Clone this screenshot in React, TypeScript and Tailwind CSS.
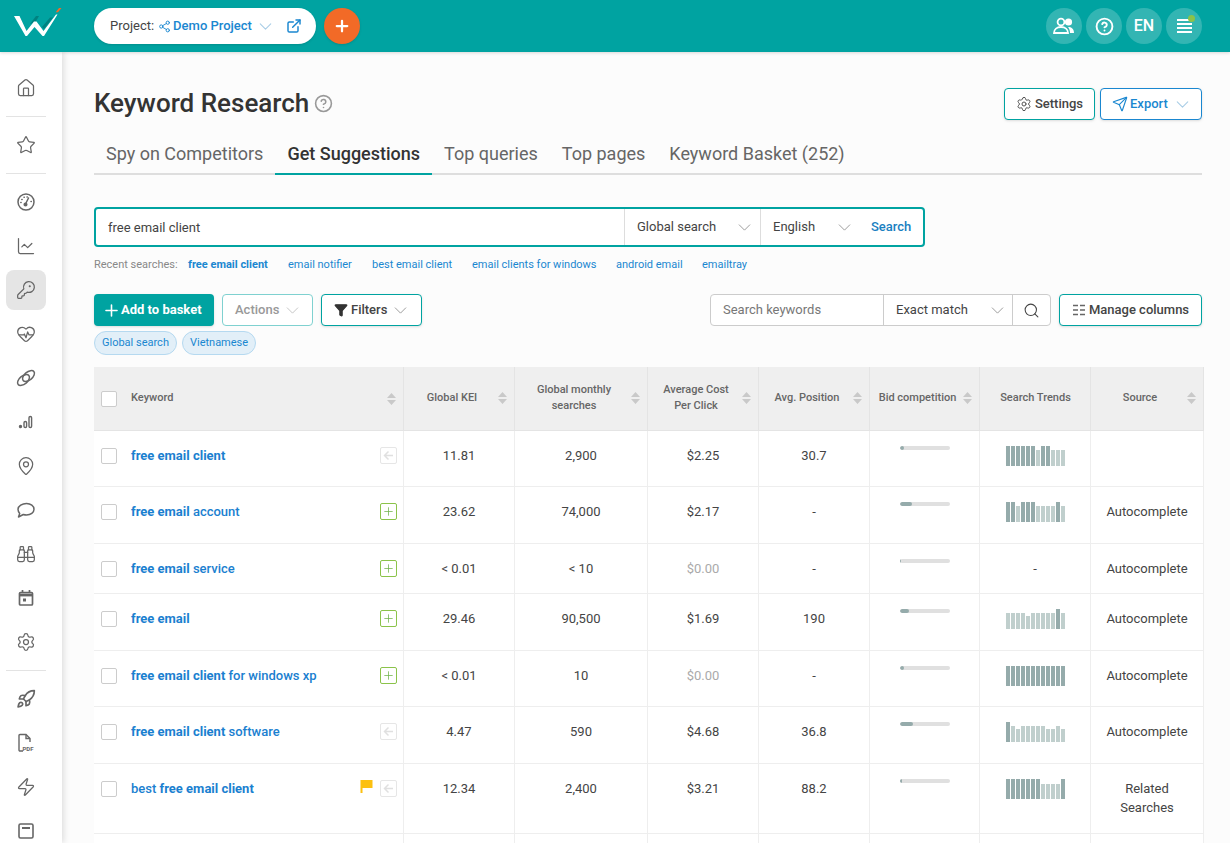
import React from "react";
import {
  Home, Star, ChartLine, KeyRound, HeartPulse, MapPin, Binoculars, Settings, Rocket, Zap,
  Share2, ChevronDown, ExternalLink, Plus, CircleHelp, Send, Search, Filter,
} from "lucide-react";

const COLS = "grid grid-cols-[310px_111px_133px_111px_111px_110px_111px_113px]";

const Gauge = () => (
  <svg width="20" height="20" viewBox="0 0 20 20" fill="none" stroke="#666" strokeWidth="1.5" strokeLinecap="round">
    <circle cx="10" cy="10" r="8" />
    <path d="M9.500 12l3-6" />
    <circle cx="9.500" cy="12.500" r="1.300" fill="#666" />
    <path d="M4.800 10.500h.3M5.800 7.500h.3M8 5.300h.3M11 5h.3M15 9.500h.3" />
  </svg>
);
const LinkIcon = () => (
  <svg width="22" height="22" viewBox="0 0 22 22" fill="none" stroke="#666" strokeWidth="1.5">
    <ellipse cx="8.500" cy="13" rx="7" ry="4" transform="rotate(-40 8.500 13)" />
    <ellipse cx="13.500" cy="9" rx="7" ry="4" transform="rotate(-40 13.500 9)" />
  </svg>
);
const SignalIcon = () => (
  <svg width="18" height="18" viewBox="0 0 18 18" fill="none" stroke="#666" strokeWidth="1.400">
    <circle cx="3.500" cy="13.500" r="1" fill="#666" />
    <rect x="7" y="8.500" width="2.600" height="6" rx="1.300" />
    <rect x="12" y="3.500" width="2.600" height="11" rx="1.300" />
  </svg>
);
const Bubble = () => (
  <svg width="20" height="20" viewBox="0 0 20 20" fill="none" stroke="#666" strokeWidth="1.5" strokeLinejoin="round">
    <path d="M10.500 3.500c4.200 0 7.500 2.500 7.500 5.800s-3.300 5.700-7.500 5.700c-1.100 0-2.200-.2-3.200-.5L2.500 17l1.200-3.600C2.700 12.300 2 10.900 2 9.300 2 6 6.300 3.500 10.500 3.500z" />
  </svg>
);
const CalendarIcon = () => (
  <svg width="18" height="18" viewBox="0 0 18 18" fill="none" stroke="#666" strokeWidth="1.700">
    <rect x="2.500" y="3.500" width="13" height="12.500" rx="1" />
    <path d="M2.500 6h13" strokeWidth="2.800" />
    <path d="M5.500 1v3M12.500 1v3" />
    <rect x="6" y="9.500" width="3" height="3" fill="#666" stroke="none" />
  </svg>
);
const PdfIcon = () => (
  <svg width="20" height="22" viewBox="0 0 20 22" fill="none" stroke="#666" strokeWidth="1.400">
    <path d="M7 19H4a1 1 0 0 1-1-1V3.500a1 1 0 0 1 1-1h6l4 4V10" />
    <path d="M10 2.500v4h4" />
    <text x="6.500" y="18.500" fontSize="6" fontWeight="700" fill="#666" stroke="none" fontFamily="Roboto, sans-serif">PDF</text>
  </svg>
);
const CardIcon = () => (
  <svg width="20" height="20" viewBox="0 0 20 20" fill="none" stroke="#666" strokeWidth="1.600">
    <rect x="3" y="3" width="14" height="14" rx="1.500" />
    <path d="M6 7h8" strokeWidth="2" />
  </svg>
);

type NavItem = { el: React.ReactNode; active?: boolean };
const stroke = { size: 20, strokeWidth: 1.5, color: "#666" };

const Item = ({ children, active }: { children: React.ReactNode; active?: boolean }) => (
  <div className="h-11 pl-[6px] flex items-center shrink-0">
    <div className={"w-10 h-10 rounded-lg flex items-center justify-center " + (active ? "bg-[#e5e5e5]" : "")}>{children}</div>
  </div>
);
const Divider = () => <div className="h-px bg-[#e3e3e3] ml-[6px] mr-4 my-[6px] shrink-0" />;

const Sidebar = () => {
  const groupA: NavItem[] = [
    { el: <Gauge /> },
    { el: <ChartLine {...stroke} /> },
    { el: <KeyRound {...stroke} />, active: true },
    { el: <HeartPulse {...stroke} /> },
    { el: <LinkIcon /> },
    { el: <SignalIcon /> },
    { el: <MapPin {...stroke} /> },
    { el: <Bubble /> },
    { el: <Binoculars {...stroke} /> },
    { el: <CalendarIcon /> },
    { el: <Settings {...stroke} /> },
  ];
  const groupB: NavItem[] = [
    { el: <Rocket {...stroke} strokeWidth={2} /> },
    { el: <PdfIcon /> },
    { el: <Zap {...stroke} /> },
    { el: <CardIcon /> },
  ];
  return (
    <aside className="w-[62px] shrink-0 bg-white shadow-[2px_0_6px_rgba(0,0,0,0.12)] pt-[14px] flex flex-col z-10">
      <Item><Home {...stroke} /></Item>
      <Divider />
      <Item><Star {...stroke} /></Item>
      <Divider />
      {groupA.map((it, i) => <Item key={i} active={it.active}>{it.el}</Item>)}
      <Divider />
      {groupB.map((it, i) => <Item key={i}>{it.el}</Item>)}
    </aside>
  );
};

const Logo = () => (
  <svg width="50" height="32" viewBox="0 0 50 32" fill="none" className="shrink-0 overflow-visible">
    <polygon points="16,14 22,6 25,6 21,13" fill="#008280" />
    <polygon points="30,19 39,7.500 36,7.500 28,17" fill="#008280" />
    <polygon points="0,6 5.500,6 12.500,21 20,11.500 22.500,11.500 29.500,21 42,4.500 43.500,4.500 30,26 28.500,26 20.500,17 13,26 11.500,26" fill="#fff" />
    <polygon points="41.700,2.300 44,2.300 47.500,-2 45,-2" fill="#f26a27" />
  </svg>
);

const Circle = ({ children }: { children: React.ReactNode }) => (
  <div className="relative w-9 h-9 rounded-full bg-white/20 flex items-center justify-center text-white">{children}</div>
);

const Header = () => (
  <header className="h-[52px] bg-[#00a3a1] flex items-center pl-[14px] pr-[28px] shrink-0 shadow-[0_1px_3px_rgba(0,0,0,0.15)] z-20">
    <Logo />
    <div className="ml-[30px] w-[222px] h-9 rounded-full bg-white flex items-center pl-4 text-[13px] shadow-sm">
      <span className="text-[#444]">Project:</span>
      <Share2 size={13} color="#1a87d0" strokeWidth={1.7} className="ml-[4px]" />
      <span className="ml-[2px] text-[#1a87d0] font-medium">Demo Project</span>
      <ChevronDown size={21} color="#a8cde6" strokeWidth={1.2} className="ml-[3px]" />
      <ExternalLink size={16} color="#1a87d0" strokeWidth={2.2} className="ml-[10px]" />
    </div>
    <div className="ml-2 w-9 h-9 rounded-full bg-[#f26a27] flex items-center justify-center shadow-sm">
      <Plus size={18} color="#fff" strokeWidth={3} />
    </div>
    <div className="ml-auto flex gap-1">
      <Circle>
        <svg width="22" height="18" viewBox="0 0 22 18" fill="#fff">
          <circle cx="8" cy="5" r="3.400" fill="none" stroke="#fff" strokeWidth="1.800" />
          <circle cx="15.500" cy="5" r="3.600" />
          <path d="M1 16c0-3.800 3-6 7-6s7 2.200 7 6z" fill="none" stroke="#fff" strokeWidth="1.800" />
          <path d="M15 10c3.500 0 6 1.800 6 6h-4c0-2.500-.7-4.500-2-6z" />
        </svg>
      </Circle>
      <Circle><CircleHelp size={19} strokeWidth={2.4} /></Circle>
      <Circle><span className="text-[16px] font-medium">EN</span></Circle>
      <Circle>
        <div className="flex flex-col gap-[2px]">
          <div className="w-[15px] h-[2px] bg-white" />
          <div className="w-[15px] h-[2px] bg-white" />
          <div className="w-[15px] h-[2px] bg-white" />
          <div className="w-[15px] h-[2px] bg-white" />
        </div>
        <span className="absolute top-[7px] right-[7px] w-[7px] h-[7px] rounded-full bg-[#8bc34a]" />
      </Circle>
    </div>
  </header>
);

const Tabs = () => {
  const tabs = ["Spy on Competitors", "Get Suggestions", "Top queries", "Top pages", "Keyword Basket (252)"];
  return (
    <div className="mt-[13px] h-[42px] border-b-2 border-[#dedede] flex text-[18px] leading-[42px]">
      {tabs.map((t, i) => (
        <div key={t} className={"px-3 h-[42px] " + (i === 1 ? "font-medium text-[#333] border-b-2 border-[#00a3a1]" : "text-[#666]")}>{t}</div>
      ))}
    </div>
  );
};

const SearchBar = () => (
  <div className="mt-8 w-[831px] h-10 border-2 border-[#00a3a1] rounded bg-white flex items-center text-[13px] text-[#444]">
    <div className="w-[529px] pl-3 pt-px text-[13px] h-full flex items-center border-r border-[#ddd]">free email client</div>
    <div className="w-[136px] pl-3 pr-[5px] h-full flex items-center justify-between border-r border-[#ddd]">
      Global search <ChevronDown size={21} color="#999" strokeWidth={1.1} />
    </div>
    <div className="w-[100px] pl-3 pr-[6px] h-full flex items-center justify-between">
      English <ChevronDown size={21} color="#999" strokeWidth={1.1} />
    </div>
    <div className="ml-[10px] text-[#1a7fc1] font-medium">Search</div>
  </div>
);

const Recent = () => (
  <div className="mt-[9px] h-[18px] flex items-center text-[11px] text-[#1a87d0]">
    <span className="text-[#888] w-[94px]">Recent searches:</span>
    <span className="font-bold w-[100px]">free email client</span>
    <span className="w-[84px]">email notifier</span>
    <span className="w-[100px]">best email client</span>
    <span className="w-[144px]">email clients for windows</span>
    <span className="w-[86px]">android email</span>
    <span>emailtray</span>
  </div>
);

const Toolbar = () => (
  <div className="mt-[20px] h-8 flex items-center text-[13px]">
    <button className="w-[120px] h-8 rounded bg-[#00a3a1] text-white font-bold flex items-center pl-2 shadow-sm">
      <Plus size={19} strokeWidth={2} /> Add to basket
    </button>
    <button className="ml-2 w-[91px] h-8 rounded border border-[#7fd1d0] bg-white text-[#999] font-medium flex items-center pl-3 gap-[3px]">
      Actions <ChevronDown size={21} color="#c4c4c4" strokeWidth={1.1} />
    </button>
    <button className="ml-2 w-[101px] h-8 rounded border border-[#00a3a1] bg-white text-[#444] font-medium flex items-center pl-3 gap-[3px] shadow-sm">
      <span className="flex items-center gap-[3px]"><Filter size={14} fill="#333" color="#333" />Filters</span>
      <ChevronDown size={21} color="#999" strokeWidth={1.1} />
    </button>
    <div className="ml-auto w-[341px] h-8 rounded border border-[#ccc] bg-white flex items-center">
      <div className="w-[173px] pl-3 h-full flex items-center text-[#777] border-r border-[#ccc]">Search keywords</div>
      <div className="w-[129px] pl-3 pr-[4px] h-full flex items-center justify-between text-[#444] border-r border-[#ccc]">
        Exact match <ChevronDown size={21} color="#999" strokeWidth={1.1} />
      </div>
      <div className="flex-1 flex items-center justify-center"><Search size={17} color="#444" strokeWidth={1.5} /></div>
    </div>
    <button className="ml-2 w-[143px] h-8 rounded border border-[#00a3a1] bg-white text-[#444] font-medium flex items-center justify-center gap-[3px] shadow-sm">
      <svg width="14" height="12" viewBox="0 0 14 12" stroke="#666" strokeWidth="1.300">
        <path d="M1 1.500h5M8 1.500h5M1 6h5M8 6h5M1 10.500h5M8 10.500h5" />
      </svg>
      Manage columns
    </button>
  </div>
);

const Chip = ({ children }: { children: React.ReactNode }) => (
  <span className="h-6 px-[7px] rounded-full border border-[#b5d9f0] bg-[#e2eff8] text-[#1a87d0] text-[11px] flex items-center">{children}</span>
);

const Sort = () => (
  <svg width="9" height="12" viewBox="0 0 9 12" fill="#c9c9c9" className="shrink-0">
    <path d="M4.500 0L9 5H0zM0 7h9l-4.500 5z" />
  </svg>
);

const Box = () => <div className="w-4 h-4 rounded-[2px] border border-[#ccc] bg-white shrink-0" />;

const Th = ({ children, sort = true }: { children: React.ReactNode; sort?: boolean }) => (
  <div className="border-r border-[#e4e4e4] flex items-center pl-2 pr-[7px] pb-[2px] text-[11px] leading-[16px] font-medium text-[#666]">
    <div className="flex-1 text-center">{children}</div>
    {sort && <div className="ml-[6px]"><Sort /></div>}
  </div>
);

const TableHead = () => (
  <div className={COLS + " h-[64px] bg-[#efefef] border-b border-[#e4e4e4]"}>
    <div className="border-r border-[#e4e4e4] flex items-center pl-[7px] pr-[7px] text-[11px] font-medium text-[#666]">
      <Box />
      <span className="ml-[14px] flex-1">Keyword</span>
      <Sort />
    </div>
    <Th>Global KEI</Th>
    <Th>Global monthly searches</Th>
    <Th>Average Cost Per Click</Th>
    <Th>Avg. Position</Th>
    <Th>Bid competition</Th>
    <Th sort={false}>Search Trends</Th>
    <Th>Source</Th>
  </div>
);

const D = "#95abab";
const L = "#c0cfcd";
type Bar = [number, string];
const d: Bar = [20, D];
const l: Bar = [16, L];
const s: Bar = [13, L];
const m: Bar = [15, L];

type Row = {
  h: string;
  kw: React.ReactNode;
  add: boolean;
  flag?: boolean;
  kei: string;
  vol: string;
  cpc: string;
  pos: string;
  bid: number;
  trend: Bar[] | null;
  src: string;
};

const M = ({ children }: { children: React.ReactNode }) => <span className="font-bold">{children}</span>;

const rows: Row[] = [
  { h: "h-[56px]", kw: <M>free email client</M>, add: false, kei: "11.81", vol: "2,900", cpc: "$2.25", pos: "30.7", bid: 4, trend: [d, d, d, d, d, d, l, d, d, l, l, l], src: "" },
  { h: "h-[57px]", kw: <><M>free email</M> account</>, add: true, kei: "23.62", vol: "74,000", cpc: "$2.17", pos: "-", bid: 12, trend: [d, d, l, d, d, d, l, l, l, l, d, l], src: "Autocomplete" },
  { h: "h-[50px]", kw: <><M>free email</M> service</>, add: true, kei: "< 0.01", vol: "< 10", cpc: "$0.00", pos: "-", bid: 1, trend: null, src: "Autocomplete" },
  { h: "h-[57px]", kw: <M>free email</M>, add: true, kei: "29.46", vol: "90,500", cpc: "$1.69", pos: "190", bid: 9, trend: [l, l, l, l, s, l, l, l, l, l, d, l], src: "Autocomplete" },
  { h: "h-[56px]", kw: <><M>free email client</M> for windows xp</>, add: true, kei: "< 0.01", vol: "10", cpc: "$0.00", pos: "-", bid: 4, trend: [d, d, d, d, d, d, d, d, d, d, d, d], src: "Autocomplete" },
  { h: "h-[57px]", kw: <><M>free email client</M> software</>, add: false, kei: "4.47", vol: "590", cpc: "$4.68", pos: "36.8", bid: 13, trend: [d, l, s, l, l, l, l, l, s, s, l, s], src: "Autocomplete" },
  { h: "h-[70px]", kw: <>best <M>free email client</M></>, add: false, flag: true, kei: "12.34", vol: "2,400", cpc: "$3.21", pos: "88.2", bid: 2, trend: [d, d, d, d, d, d, d, m, m, m, m, d], src: "Related Searches" },
  { h: "h-[70px]", kw: null, add: false, kei: "", vol: "", cpc: "", pos: "", bid: -1, trend: [], src: "" },
];

const Td = ({ children }: { children?: React.ReactNode }) => (
  <div className="border-r border-[#eeeeee] pt-[15px] px-2 text-center text-[13px] leading-[19px] text-[#444]">{children}</div>
);

const ActionIcon = ({ add }: { add: boolean }) =>
  add ? (
    <div className="w-[17px] h-[17px] rounded-[2px] border border-[#8bc34a] flex items-center justify-center">
      <Plus size={13} color="#6fb24a" strokeWidth={1.4} />
    </div>
  ) : (
    <div className="w-[17px] h-[17px] rounded-[2px] border border-[#e6e6e6] flex items-center justify-center">
      <svg width="11" height="11" viewBox="0 0 11 11" fill="none" stroke="#e0e0e0" strokeWidth="1.500"><path d="M10 5.500H1.500M5.500 1.500l-4 4 4 4" /></svg>
    </div>
  );

const TableRow = ({ r }: { r: Row }) => (
  <div className={COLS + " bg-white border-b border-[#eeeeee] " + r.h}>
    <div className="border-r border-[#eeeeee] pl-[7px] pr-[6px] pt-[15px] flex items-start text-[13px] leading-[19px] text-[#1a80d0] font-medium">
      {r.kw !== null && (
        <>
          <div className="mt-[2px]"><Box /></div>
          <span className="ml-[14px] flex-1">{r.kw}</span>
          {r.flag && (
            <svg width="13" height="14" viewBox="0 0 13 14" fill="#fcc010" className="mr-[7px] shrink-0">
              <path d="M0.500 1h12v8H2.500v5H0.500z" />
            </svg>
          )}
          <div className="mt-[1px]"><ActionIcon add={r.add} /></div>
        </>
      )}
    </div>
    <Td>{r.kei}</Td>
    <Td>{r.vol}</Td>
    <Td>{r.cpc === "$0.00" ? <span className="text-[#aaa]">{r.cpc}</span> : r.cpc}</Td>
    <Td>{r.pos}</Td>
    <div className="border-r border-[#eeeeee] pt-[15px] pl-[30px]">
      {r.bid >= 0 && (
        <div className="w-[50px] h-1 rounded-sm bg-[#e0e0e0] overflow-hidden">
          <div className="h-full rounded-sm bg-[#95abab]" style={{ width: r.bid }} />
        </div>
      )}
    </div>
    {r.trend === null ? (
      <Td>-</Td>
    ) : (
      <div className="border-r border-[#eeeeee] pt-[15px] pl-[26px]">
        <div className="flex items-end gap-px h-5">
          {r.trend.map((b, i) => (
            <div key={i} className="w-1" style={{ height: b[0], backgroundColor: b[1] }} />
          ))}
        </div>
      </div>
    )}
    <Td>{r.src}</Td>
  </div>
);

export default function App() {
  return (
    <div className="w-[1230px] h-[843px] overflow-hidden flex flex-col bg-[#fcfcfc] font-['Roboto',sans-serif]">
      <Header />
      <div className="flex flex-1 min-h-0">
        <Sidebar />
        <main className="flex-1 min-w-0 pl-8 pr-7 pt-9">
          <div className="h-8 flex items-center justify-between">
            <div className="flex items-center gap-[5px] pb-[2px]">
              <h1 className="text-[26px] font-medium text-[#333]">Keyword Research</h1>
              <CircleHelp size={19} color="#999" strokeWidth={2} />
            </div>
            <div className="flex gap-[5px] text-[13px] font-medium">
              <button className="w-[91px] h-8 rounded border border-[#00a3a1] bg-white text-[#444] flex items-center justify-center gap-[3px] shadow-sm">
                <Settings size={16} color="#555" strokeWidth={1.5} /> Settings
              </button>
              <button className="w-[102px] h-8 rounded border border-[#1a87d0] bg-white text-[#1a87d0] flex items-center pl-[11px] gap-[2px] shadow-sm">
                <Send size={16} strokeWidth={1.7} /> Export
                <ChevronDown size={21} color="#a8cde6" strokeWidth={1.2} className="ml-[2px]" />
              </button>
            </div>
          </div>
          <Tabs />
          <SearchBar />
          <Recent />
          <Toolbar />
          <div className="mt-[5px] flex gap-[5px]">
            <Chip>Global search</Chip>
            <Chip>Vietnamese</Chip>
          </div>
          <div className="mt-3 w-[1110px]">
            <TableHead />
            {rows.map((r, i) => <TableRow key={i} r={r} />)}
          </div>
        </main>
      </div>
    </div>
  );
}
